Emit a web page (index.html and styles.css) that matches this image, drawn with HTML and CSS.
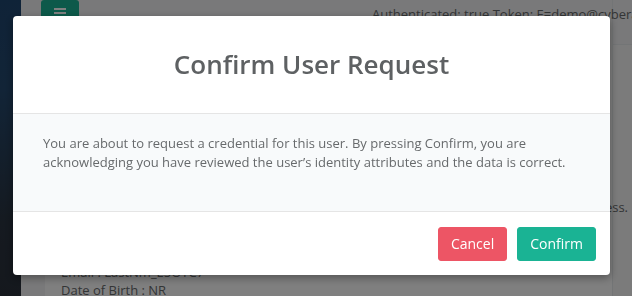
FILE: index.html
```html
<!DOCTYPE html>
<html lang="en">
<head>
<meta charset="utf-8">
<title>Confirm User Request</title>
<link rel="stylesheet" href="styles.css">
</head>
<body>
<div class="page">
  <aside class="sidebar"></aside>
  <div class="main">
    <header class="topbar">
      <button class="minimalize" type="button" aria-label="Toggle menu">
        <span class="bar"></span><span class="bar"></span><span class="bar"></span>
      </button>
      <div class="auth">Authenticated: true Token: E=demo@cyberark.com</div>
    </header>
    <div class="content">
      <div class="card">
        <p class="line right">Please review the identity attributes of this user before you continue the request process.</p>
        <p class="line">Email : LastNm_E5OTC7</p>
        <p class="line">Date of Birth : NR</p>
      </div>
    </div>
  </div>
  <div class="rightstrip"><div class="rs-top"></div></div>
</div>

<div class="backdrop"></div>

<div class="modal" role="dialog" aria-labelledby="modal-title">
  <div class="modal-header">
    <h4 class="modal-title" id="modal-title">Confirm User Request</h4>
  </div>
  <div class="modal-body">
    <p>You are about to request a credential for this user. By pressing Confirm, you are acknowledging you have reviewed the user’s identity attributes and the data is correct.</p>
  </div>
  <div class="modal-footer">
    <button class="btn btn-danger" type="button">Cancel</button>
    <button class="btn btn-primary" type="button">Confirm</button>
  </div>
</div>
</body>
</html>
```
FILE: styles.css
```css
html, body {
  margin: 0;
  height: 100%;
  overflow: hidden;
}

body {
  font-family: "Open Sans", "Noto Sans", sans-serif;
  font-size: 13px;
  line-height: 18.57px;
  color: #676a6c;
  background: #f3f3f4;
}

.page {
  display: flex;
  height: 100%;
}

.sidebar {
  width: 21px;
  flex: none;
  background: linear-gradient(#1f4670 0%, #24496f 30%, #2a3441 75%, #2a313b 100%);
}

.main {
  flex: 1;
  min-width: 0;
  display: flex;
  flex-direction: column;
  position: relative;
  z-index: 1;
}

.topbar {
  height: 45px;
  flex: none;
  display: flex;
  align-items: flex-start;
  padding-left: 20px;
  box-sizing: border-box;
}

.minimalize {
  width: 38px;
  height: 32px;
  flex: none;
  border: 0;
  border-radius: 3px;
  background: #1ab394;
  display: flex;
  flex-direction: column;
  align-items: center;
  gap: 2px;
  padding: 8px 0 0;
  box-sizing: border-box;
}

.minimalize .bar {
  display: block;
  width: 12px;
  height: 2px;
  background: #fff;
}

.auth {
  margin-left: 293px;
  padding-top: 5px;
  white-space: nowrap;
  color: #676a6c;
}

.content {
  flex: 1;
  padding: 15px 0 0 24px;
}

.card {
  background: #fff;
  height: 100%;
  padding: 138px 0 0 16px;
  box-sizing: border-box;
}

.card .line {
  margin: 0;
  white-space: nowrap;
}

.card .right {
  display: flex;
  justify-content: flex-end;
  margin-right: -16px;
  margin-bottom: 46px;
}

.rightstrip {
  width: 20px;
  flex: none;
  border-left: 1px solid #e7eaec;
  box-sizing: border-box;
  background: #f6f6f6;
}

.rs-top {
  height: 45px;
  border-bottom: 1px solid #e7eaec;
  box-sizing: border-box;
  background: #f3f3f4;
}

.backdrop {
  position: fixed;
  inset: 0;
  z-index: 2;
  background: rgba(0, 0, 0, 0.5);
}

.modal {
  position: fixed;
  z-index: 3;
  left: 13px;
  top: 16px;
  width: 597px;
  background: #fff;
  border-radius: 4px;
  box-shadow: 0 3px 8px rgba(0, 0, 0, 0.35);
  overflow: hidden;
}

.modal-header {
  padding: 30px 15px;
  border-bottom: 1px solid #e5e5e5;
  text-align: center;
}

.modal-title {
  margin: 0;
  font-size: 26px;
  font-weight: 600;
  line-height: 37px;
  color: #5e6163;
}

.modal-body {
  background: #f8fafb;
  padding: 20px 30px 30px;
}

.modal-body p {
  margin: 0 0 10px;
  color: #676a6c;
}

.modal-footer {
  border-top: 1px solid #e5e5e5;
  padding: 15px 14px 14px;
  display: flex;
  justify-content: flex-end;
  gap: 10px;
}

.btn {
  font-family: inherit;
  font-size: 14px;
  line-height: 20px;
  padding: 6px 12px;
  border: 1px solid transparent;
  border-radius: 3px;
  color: #fff;
  cursor: pointer;
}

.btn-danger {
  background: #ed5565;
  border-color: #ed5565;
}

.btn-primary {
  background: #1ab394;
  border-color: #1ab394;
}
```
